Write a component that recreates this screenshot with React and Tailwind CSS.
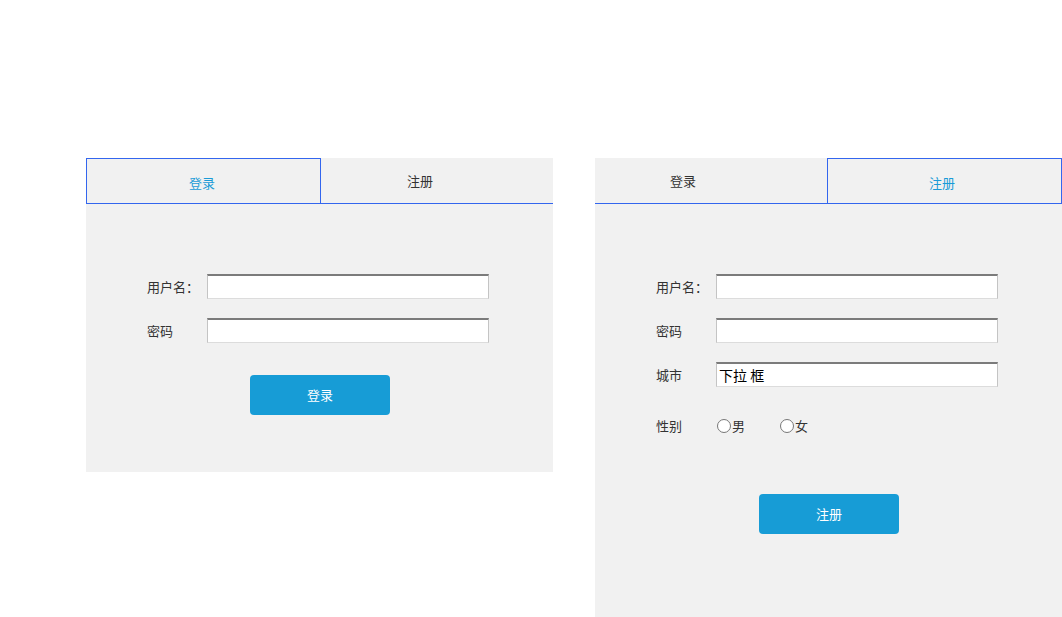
import React from "react";

const font = { fontFamily: '"Noto Sans CJK SC", "Noto Sans", sans-serif' };

function Input({ children }) {
  return (
    <div className="w-[282px] h-[25px] bg-white border border-t-2 border-t-[#7b7b7b] border-x-[#c4c4c4] border-b-[#dcdcdc] flex items-center pl-[2px] text-[14px] leading-none text-black">
      {children}
    </div>
  );
}

function Row({ label, children, className = "" }) {
  return (
    <div className={"flex items-center " + className}>
      <div className="w-[60px] text-[13px] text-[#333]">{label}</div>
      {children}
    </div>
  );
}

function Tabs({ active }) {
  if (active === "login") {
    return (
      <div className="flex h-[46px] border-b border-[#3366ee]">
        <div className="w-[235px] flex items-center pl-[102px] pt-[3px] text-[13px] text-[#1a9bd7] border-t border-x border-[#3366ee]">
          登录
        </div>
        <div className="flex-1 flex items-center pl-[86px] text-[13px] text-[#333]">注册</div>
      </div>
    );
  }
  return (
    <div className="flex h-[46px] border-b border-[#3366ee]">
      <div className="w-[232px] flex items-center pl-[75px] text-[13px] text-[#333]">登录</div>
      <div className="flex-1 flex items-center pl-[101px] pt-[3px] text-[13px] text-[#1a9bd7] border-t border-x border-[#3366ee]">
        注册
      </div>
    </div>
  );
}

function Button({ children }) {
  return (
    <div className="w-[140px] h-[40px] rounded-[4px] bg-[#179cd6] text-white text-[13px] flex items-center justify-center">
      {children}
    </div>
  );
}

function Radio({ label }) {
  return (
    <div className="flex items-center">
      <span className="w-[14px] h-[14px] rounded-full border border-[#777] bg-white mr-[1px]" />
      <span className="text-[13px] text-[#333]">{label}</span>
    </div>
  );
}

export default function App() {
  return (
    <div style={font} className="w-[1062px] h-[617px] bg-white pt-[158px] pl-[86px] flex gap-[42px] overflow-hidden">
      <div className="w-[467px] h-[314px] bg-[#f1f1f1] flex flex-col">
        <Tabs active="login" />
        <div className="pl-[61px] pt-[70px] flex flex-col">
          <Row label="用户名：">
            <Input />
          </Row>
          <Row label="密码" className="mt-[19px]">
            <Input />
          </Row>
          <div className="mt-[32px] ml-[103px]">
            <Button>登录</Button>
          </div>
        </div>
      </div>
      <div className="w-[467px] h-[459px] bg-[#f1f1f1] flex flex-col">
        <Tabs active="reg" />
        <div className="pl-[61px] pt-[70px] flex flex-col">
          <Row label="用户名：">
            <Input />
          </Row>
          <Row label="密码" className="mt-[19px]">
            <Input />
          </Row>
          <Row label="城市" className="mt-[19px]">
            <Input>下拉 框</Input>
          </Row>
          <Row label="性别" className="mt-[29px]">
            <div className="flex gap-[35px] ml-[1px]">
              <Radio label="男" />
              <Radio label="女" />
            </div>
          </Row>
          <div className="mt-[58px] ml-[103px]">
            <Button>注册</Button>
          </div>
        </div>
      </div>
    </div>
  );
}
